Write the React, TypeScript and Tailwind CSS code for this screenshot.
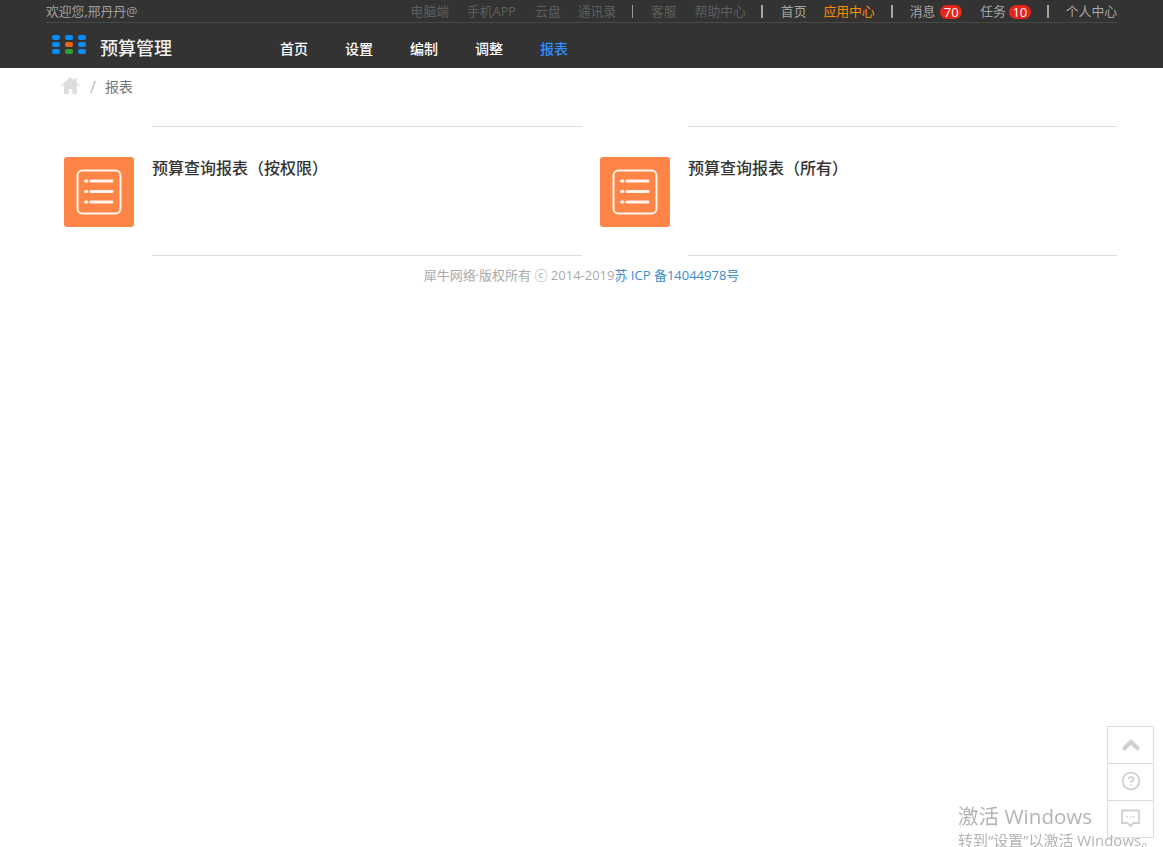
import React from "react";
import { ChevronUp, CircleHelp } from "lucide-react";

const font = "font-['Open_Sans','Noto_Sans_CJK_SC',sans-serif]";

const Divider = ({ className }: { className: string }) => (
  <span className={`block w-[2px] h-[13px] bg-[#a5a5a5] ${className}`} />
);

const Badge = ({ n, className }: { n: number; className: string }) => (
  <span className={`block w-[22px] h-[14px] rounded-[7px] bg-[#e7231a] text-white text-[13px] leading-[14px] text-center font-medium ${className}`}>
    {n}
  </span>
);

const Logo = () => {
  const colors = ["#0a8cf5", "#0a8cf5", "#0a8cf5", "#0a8cf5", "#e8651a", "#0a8cf5", "#0a8cf5", "#2f9e36", "#0a8cf5"];
  return (
    <div className="grid grid-cols-3 gap-x-[5px] gap-y-[2px] w-[34px]">
      {colors.map((c, i) => (
        <svg key={i} width="8" height="5" viewBox="0 0 8 5" className="block">
          <rect width="8" height="5" rx="2" fill={c} />
        </svg>
      ))}
    </div>
  );
};

const ListIcon = () => (
  <svg width="46" height="46" viewBox="0 0 46 46" fill="none" stroke="#fff" strokeOpacity="0.9">
    <rect x="1.5" y="1.5" width="43" height="43" rx="5" strokeWidth="2" />
    <path d="M15 12h21M15 22.5h21M15 33h21" strokeWidth="3" strokeLinecap="round" />
    <path d="M9.5 12h1.5M9.5 22.5h1.5M9.5 33h1.5" strokeWidth="3" strokeLinecap="round" />
  </svg>
);

const Card = ({ title, className }: { title: string; className: string }) => (
  <div className={`flex ${className}`}>
    <div className="mt-[31px] w-[70px] h-[70px] rounded-[3px] bg-[#ff8547] flex items-center justify-center shrink-0">
      <ListIcon />
    </div>
    <div className="ml-[18px] flex-1 h-[130px] border-y border-[#dddddd] pt-[29px]">
      <h3 className="text-[16px] leading-[24px] font-medium text-[#333333]">{title}</h3>
    </div>
  </div>
);

export default function App() {
  return (
    <div className={`${font} min-h-[847px] bg-white relative overflow-hidden`}>
      <header className="h-[68px] bg-[#333333] px-[46px]">
        <div className="h-[23px] pt-[1px] border-b border-[#484848] flex items-center justify-between text-[12.8px]">
          <span className="text-[#a0a0a0]">欢迎您,邢丹丹@</span>
          <div className="flex items-center text-[#5f5f5f]">
            <span>电脑端</span>
            <span className="ml-[18px]">手机APP</span>
            <span className="ml-[19px]">云盘</span>
            <span className="ml-[17px]">通讯录</span>
            <span className="block ml-[16px] w-px h-[13px] bg-[#9a9a9a]" />
            <span className="ml-[18px]">客服</span>
            <span className="ml-[18px]">帮助中心</span>
            <Divider className="ml-[15px]" />
            <span className="ml-[18px] text-[#a5a5a5]">首页</span>
            <span className="ml-[17px] text-[#ff8c00]">应用中心</span>
            <Divider className="ml-[16px]" />
            <span className="ml-[17px] text-[#a5a5a5]">消息</span>
            <Badge n={70} className="ml-[5px]" />
            <span className="ml-[18px] text-[#a5a5a5]">任务</span>
            <Badge n={10} className="ml-[3px]" />
            <Divider className="ml-[16px]" />
            <span className="ml-[17px] text-[#a5a5a5]">个人中心</span>
          </div>
        </div>
        <div className="h-[45px] pt-[6px] flex items-center">
          <div className="ml-[6px] -mt-[9px]">
            <Logo />
          </div>
          <span className="ml-[14px] text-[18px] font-medium text-[#f0f0f0] w-[180px]">预算管理</span>
          <nav className="flex gap-[37px] text-[14px] font-medium text-white">
            <span>首页</span>
            <span>设置</span>
            <span>编制</span>
            <span>调整</span>
            <span className="text-[#2f8fff]">报表</span>
          </nav>
        </div>
      </header>

      <div className="h-[37px] pl-[61px] flex items-center text-[14px]">
        <svg width="19" height="17" viewBox="0 0 19 17" fill="#dddddd" className="-mt-[3px]">
          <path d="M9.5 0L0 8.6l1 1L3 8v9h4.6v-5h3.8v5H16V8l2 1.6 1-1L15.5 5.5V1.2h-2.4v2.2z" />
        </svg>
        <span className="ml-[10px] text-[16px] text-[#bbbbbb]">/</span>
        <span className="ml-[9px] text-[#777777]">报表</span>
      </div>

      <div className="mt-[21px] pl-[64px] pr-[46px] flex gap-[18px]">
        <Card title="预算查询报表（按权限）" className="w-[518px]" />
        <Card title="预算查询报表（所有）" className="flex-1" />
      </div>

      <footer className="mt-[9px] text-center text-[13px] leading-[20px] text-[#aaaaaa]">
        犀牛网络·版权所有 <span className="font-['Noto_Sans_CJK_SC',sans-serif]">ⓒ</span> 2014-2019<span className="text-[#428bca]">苏 ICP 备14044978号</span>
      </footer>

      <div className="fixed left-[1107px] top-[726px] w-[47px] h-[112px] border border-[#dddddd] flex flex-col">
        <div className="h-[37px] flex items-center justify-center border-b border-[#dddddd]">
          <ChevronUp size={26} strokeWidth={3.8} color="#d0d0d0" />
        </div>
        <div className="h-[37px] pb-[2px] flex items-center justify-center border-b border-[#dddddd]">
          <CircleHelp size={20} strokeWidth={2.2} color="#d0d0d0" />
        </div>
        <div className="flex-1 pb-[2px] flex items-center justify-center">
          <svg width="19" height="19" viewBox="0 0 19 19">
            <path d="M1 1.5h17v12.5h-5.5l-3 3-3-3H1z" fill="none" stroke="#d0d0d0" strokeWidth="1.8" />
            <path d="M5.5 7.8h1.6M8.7 7.8h1.6M11.9 7.8h1.6" stroke="#d0d0d0" strokeWidth="1.6" />
          </svg>
        </div>
      </div>

      <div className="fixed left-[958px] top-[803px] text-[#b4b4b4] pointer-events-none whitespace-nowrap">
        <div className="text-[20.6px] leading-[26px]">激活 Windows</div>
        <div className="text-[15px] leading-[12px] mt-[5px]">转到“设置”以激活 Windows。</div>
      </div>
    </div>
  );
}
